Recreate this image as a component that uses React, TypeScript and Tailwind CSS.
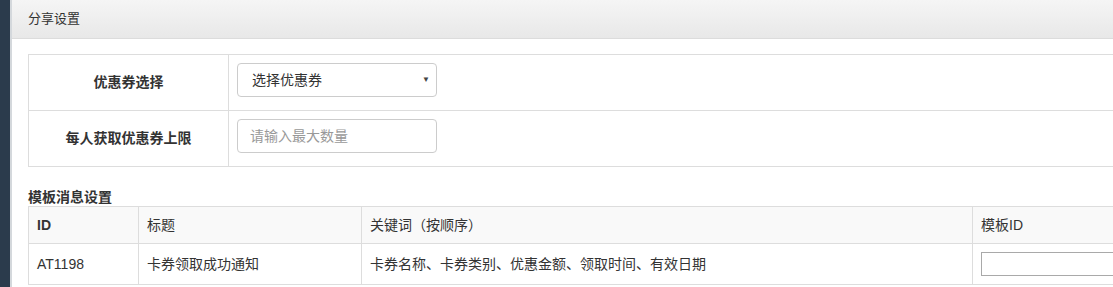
const FONT = { fontFamily: '"Helvetica Neue", Arial, "Liberation Sans", "Noto Sans CJK SC", sans-serif' };

export default function App() {
  return (
    <div className="flex h-[287px] w-[1113px] overflow-hidden bg-white text-[14px] text-[#333]" style={FONT}>
      {/* left nav edge */}
      <div className="w-[10px] shrink-0 bg-[#2b3b4c]" />
      <div className="w-[2px] shrink-0 bg-[#d4d8dc]" />

      <div className="min-w-0 flex-1">
        <div className="flex h-[39px] items-center border-b border-[#dcdcdc] bg-gradient-to-b from-[#f5f5f5] to-[#e8e8e8] pl-[16px] text-[13px] text-[#333]">
          分享设置
        </div>

        <div className="pl-[16px] pt-[15px]">
          <table className="w-[1100px] table-fixed border-collapse">
            <colgroup>
              <col className="w-[200px]" />
              <col />
            </colgroup>
            <tbody>
              <tr className="h-[56px]">
                <td className="border border-[#ddd] text-center font-bold">优惠券选择</td>
                <td className="border border-[#ddd] pl-[8px] pt-[8px] align-top">
                  <div className="flex h-[34px] w-[200px] items-center justify-between rounded-[4px] border border-[#ccc] pl-[14px] pr-[6px]">
                    <span>选择优惠券</span>
                    <span className="text-[8px] text-[#444]">▼</span>
                  </div>
                </td>
              </tr>
              <tr className="h-[56px]">
                <td className="border border-[#ddd] text-center font-bold">每人获取优惠券上限</td>
                <td className="border border-[#ddd] pl-[8px] pt-[8px] align-top">
                  <div className="flex h-[34px] w-[200px] items-center rounded-[4px] border border-[#ccc] px-[12px] text-[#999]">
                    请输入最大数量
                  </div>
                </td>
              </tr>
            </tbody>
          </table>

          <div className="mt-[21px] font-bold leading-[18px]">模板消息设置</div>

          <table className="w-[1110px] table-fixed border-collapse">
            <colgroup>
              <col className="w-[110px]" />
              <col className="w-[223px]" />
              <col className="w-[611px]" />
              <col />
            </colgroup>
            <thead>
              <tr className="h-[37px] bg-[#f9f9f9]">
                <th className="border border-[#ddd] pl-[8px] text-left font-bold">ID</th>
                <th className="border border-[#ddd] pl-[8px] text-left font-normal">标题</th>
                <th className="border border-[#ddd] pl-[8px] text-left font-normal">关键词（按顺序）</th>
                <th className="border border-[#ddd] pl-[8px] text-left font-normal">模板ID</th>
              </tr>
            </thead>
            <tbody>
              <tr className="h-[41px]">
                <td className="border border-[#ddd] pl-[8px]">AT1198</td>
                <td className="border border-[#ddd] pl-[8px]">卡券领取成功通知</td>
                <td className="border border-[#ddd] pl-[8px]">卡券名称、卡券类别、优惠金额、领取时间、有效日期</td>
                <td className="border border-[#ddd] pl-[8px] pt-[8px] align-top">
                  <div className="h-[24px] w-[160px] border border-[#a9a9a9]" />
                </td>
              </tr>
            </tbody>
          </table>
        </div>
      </div>
    </div>
  );
}
